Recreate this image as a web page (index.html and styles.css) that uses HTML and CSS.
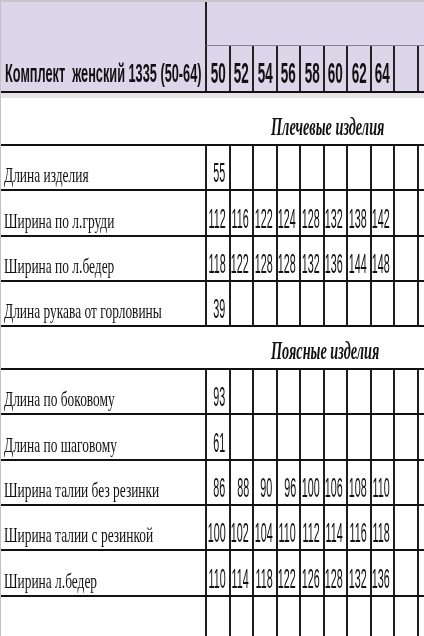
FILE: index.html
```html
<!DOCTYPE html>
<html lang="ru">
<head>
<meta charset="utf-8">
<title>Комплект женский 1335 (50-64)</title>
<link rel="stylesheet" href="styles.css">
</head>
<body>
<div class="sheet">
  <div class="head">
    <div class="head-title"><span class="ht">Комплект  женский 1335 (50-64)</span></div>
    <div class="head-right">
      <div class="head-top"></div>
      <div class="head-sizes">
        <div class="hc"><span>50</span></div>
        <div class="hc"><span>52</span></div>
        <div class="hc"><span>54</span></div>
        <div class="hc"><span>56</span></div>
        <div class="hc"><span>58</span></div>
        <div class="hc"><span>60</span></div>
        <div class="hc"><span>62</span></div>
        <div class="hc"><span>64</span></div>
        <div class="hc"></div>
        <div class="hc"></div>
      </div>
    </div>
  </div>
  <div class="strip"></div>

  <div class="section first"><span class="sec-title">Плечевые изделия</span></div>

  <div class="row">
    <div class="label"><span>Длина изделия</span></div>
    <div class="c"><span>55</span></div><div class="c"></div><div class="c"></div><div class="c"></div><div class="c"></div><div class="c"></div><div class="c"></div><div class="c"></div><div class="c"></div><div class="c"></div>
  </div>
  <div class="row">
    <div class="label"><span>Ширина по л.груди</span></div>
    <div class="c"><span>112</span></div><div class="c"><span>116</span></div><div class="c"><span>122</span></div><div class="c"><span>124</span></div><div class="c"><span>128</span></div><div class="c"><span>132</span></div><div class="c"><span>138</span></div><div class="c"><span>142</span></div><div class="c"></div><div class="c"></div>
  </div>
  <div class="row">
    <div class="label"><span>Ширина по л.бедер</span></div>
    <div class="c"><span>118</span></div><div class="c"><span>122</span></div><div class="c"><span>128</span></div><div class="c"><span>128</span></div><div class="c"><span>132</span></div><div class="c"><span>136</span></div><div class="c"><span>144</span></div><div class="c"><span>148</span></div><div class="c"></div><div class="c"></div>
  </div>
  <div class="row">
    <div class="label"><span>Длина рукава от горловины</span></div>
    <div class="c"><span>39</span></div><div class="c"></div><div class="c"></div><div class="c"></div><div class="c"></div><div class="c"></div><div class="c"></div><div class="c"></div><div class="c"></div><div class="c"></div>
  </div>

  <div class="section second"><span class="sec-title">Поясные изделия</span></div>

  <div class="row">
    <div class="label"><span>Длина по боковому</span></div>
    <div class="c"><span>93</span></div><div class="c"></div><div class="c"></div><div class="c"></div><div class="c"></div><div class="c"></div><div class="c"></div><div class="c"></div><div class="c"></div><div class="c"></div>
  </div>
  <div class="row">
    <div class="label"><span>Длина по шаговому</span></div>
    <div class="c"><span>61</span></div><div class="c"></div><div class="c"></div><div class="c"></div><div class="c"></div><div class="c"></div><div class="c"></div><div class="c"></div><div class="c"></div><div class="c"></div>
  </div>
  <div class="row">
    <div class="label"><span>Ширина талии без резинки</span></div>
    <div class="c"><span>86</span></div><div class="c"><span>88</span></div><div class="c"><span>90</span></div><div class="c"><span>96</span></div><div class="c"><span>100</span></div><div class="c"><span>106</span></div><div class="c"><span>108</span></div><div class="c"><span>110</span></div><div class="c"></div><div class="c"></div>
  </div>
  <div class="row">
    <div class="label"><span>Ширина талии с резинкой</span></div>
    <div class="c"><span>100</span></div><div class="c"><span>102</span></div><div class="c"><span>104</span></div><div class="c"><span>110</span></div><div class="c"><span>112</span></div><div class="c"><span>114</span></div><div class="c"><span>116</span></div><div class="c"><span>118</span></div><div class="c"></div><div class="c"></div>
  </div>
  <div class="row">
    <div class="label"><span>Ширина л.бедер</span></div>
    <div class="c"><span>110</span></div><div class="c"><span>114</span></div><div class="c"><span>118</span></div><div class="c"><span>122</span></div><div class="c"><span>126</span></div><div class="c"><span>128</span></div><div class="c"><span>132</span></div><div class="c"><span>136</span></div><div class="c"></div><div class="c"></div>
  </div>
  <div class="row">
    <div class="label"></div>
    <div class="c"></div><div class="c"></div><div class="c"></div><div class="c"></div><div class="c"></div><div class="c"></div><div class="c"></div><div class="c"></div><div class="c"></div><div class="c"></div>
  </div>
</div>
</body>
</html>
```

FILE: styles.css
```css
* { box-sizing: border-box; }

html, body {
  margin: 0;
  padding: 0;
  background: #ffffff;
}

body {
  width: 424px;
  height: 636px;
  overflow: hidden;
  color: #111111;
  font-family: "Liberation Sans", Arial, sans-serif;
}

.sheet {
  width: 424px;
  border-left: 1px solid #c2c2c2;
}

/* text is squeezed horizontally; render it in grayscale */
.ht, .hc span, .sec-title, .label span, .c span {
  filter: grayscale(1);
}

/* ---------- header ---------- */
.head {
  display: grid;
  grid-template-columns: 204px 1fr;
  height: 93px;
  background: #dcd6ea;
  border-top: 2px solid #c6c4cc;
  border-bottom: 2px solid #111111;
}

.head-title {
  display: flex;
  align-items: flex-end;
  padding: 0 0 7px 4px;
  white-space: pre;
}

.ht {
  display: inline-block;
  font-size: 26px;
  line-height: 22px;
  font-weight: bold;
  transform: scaleX(0.49);
  transform-origin: 0 50%;
}

.head-right {
  display: flex;
  flex-direction: column;
}

.head-top {
  height: 44px;
  border-left: 2px solid #222222;
  border-bottom: 1.5px solid #85818f;
}

.head-sizes {
  flex: 1;
  display: grid;
  grid-template-columns: repeat(9, 23.5px) 1fr;
}

.hc {
  border-left: 2px solid #222222;
  display: flex;
  justify-content: center;
  align-items: flex-end;
  padding-bottom: 7px;
  min-width: 0;
}

.hc span {
  display: block;
  font-size: 29px;
  line-height: 22px;
  font-weight: bold;
  transform: scaleX(0.465);
  transform-origin: 50% 50%;
}

.strip {
  height: 5px;
  background: #e4e4e7;
}

/* ---------- section titles ---------- */
.section {
  display: flex;
  align-items: flex-end;
  padding: 0 0 7px 270px;
  border-bottom: 2px solid #111111;
}

.section.first { height: 48px; }
.section.second { height: 43px; }

.sec-title {
  display: block;
  white-space: nowrap;
  font-family: "Liberation Serif", "Times New Roman", serif;
  font-style: italic;
  font-weight: bold;
  font-size: 25px;
  line-height: 20px;
  transform: scaleX(0.57);
  transform-origin: 0 50%;
}

/* ---------- data rows ---------- */
.row {
  display: grid;
  grid-template-columns: 204px repeat(9, 23.5px) 1fr;
  height: 45.3px;
  border-bottom: 2px solid #111111;
}

.label {
  display: flex;
  align-items: flex-end;
  padding: 0 0 4px 3px;
  white-space: nowrap;
  min-width: 0;
}

.label span {
  display: block;
  font-family: "Liberation Serif", "Times New Roman", serif;
  font-size: 22px;
  line-height: 20px;
  transform: scaleX(0.61);
  transform-origin: 0 50%;
}

.c {
  border-left: 2px solid #1e1e1e;
  display: flex;
  justify-content: flex-end;
  align-items: flex-end;
  padding: 0 3px 6px 0;
  min-width: 0;
}

.c span {
  display: block;
  white-space: nowrap;
  font-size: 28px;
  line-height: 20px;
  transform: scaleX(0.385);
  transform-origin: 100% 50%;
}
```
